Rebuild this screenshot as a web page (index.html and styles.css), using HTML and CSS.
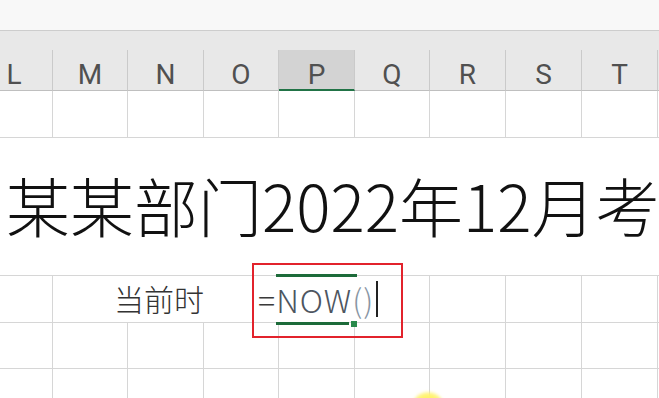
FILE: index.html
```html
<!DOCTYPE html>
<html lang="zh-CN">
<head>
<meta charset="utf-8">
<title>考勤表</title>
<link rel="stylesheet" href="styles.css">
</head>
<body>
<div class="page">
  <div class="topstrip"></div>
  <div class="header grid">
    <div class="hcell first">L</div>
    <div class="hcell">M</div>
    <div class="hcell">N</div>
    <div class="hcell">O</div>
    <div class="hcell sel">P</div>
    <div class="hcell">Q</div>
    <div class="hcell">R</div>
    <div class="hcell">S</div>
    <div class="hcell">T</div>
    <div class="hcell last"></div>
  </div>
  <div class="grid body">
    <!-- row 1 -->
    <div class="cell r1"></div><div class="cell r1"></div><div class="cell r1"></div><div class="cell r1"></div><div class="cell r1"></div><div class="cell r1"></div><div class="cell r1"></div><div class="cell r1"></div><div class="cell r1"></div><div class="cell r1 last"></div>
    <!-- row 2: merged title -->
    <div class="cell title">某某部门2022年12月考勤表</div>
    <!-- row 3 -->
    <div class="cell r3"></div>
    <div class="cell r3 label">当前时</div>
    <div class="cell r3 open"></div>
    <div class="cell r3 open active">
      <div class="editor"><span class="eq">=</span><span class="fn">NOW</span><span class="par">()</span><span class="caret"></span></div>
      <div class="handle"></div>
    </div>
    <div class="cell r3"></div>
    <div class="cell r3"></div>
    <div class="cell r3"></div>
    <div class="cell r3"></div>
    <div class="cell r3 last"></div>
    <!-- row 4 -->
    <div class="cell r4"></div><div class="cell r4"></div><div class="cell r4"></div><div class="cell r4"></div><div class="cell r4"></div><div class="cell r4"></div><div class="cell r4"></div><div class="cell r4"></div><div class="cell r4"></div><div class="cell r4 last"></div>
    <!-- row 5 -->
    <div class="cell r5"></div><div class="cell r5"></div><div class="cell r5"></div><div class="cell r5"></div><div class="cell r5"></div><div class="cell r5"></div><div class="cell r5"></div><div class="cell r5"></div><div class="cell r5"></div><div class="cell r5 last"></div>
  </div>
  <div class="annot"></div>
  <div class="pointer"></div>
</div>
</body>
</html>
```

FILE: styles.css
```css
* { box-sizing: border-box; }
html, body { margin: 0; padding: 0; background: #fff; }
.page {
  position: relative;
  width: 659px;
  height: 398px;
  overflow: hidden;
  background: #fff;
  font-family: "Noto Sans CJK SC", "Noto Sans", sans-serif;
}
.topstrip {
  height: 30px;
  background: #f8f8f8;
}
.grid {
  display: grid;
  grid-template-columns: 53px 75px 76px 75px 76px 75px 76px 76px 76px 1fr;
}
.header {
  background: #e8e8e8;
  border-top: 1px solid #cdcdcd;
  padding-top: 19px;
}
.hcell {
  height: 41px;
  padding-top: 10px;
  line-height: 30px;
  text-align: center;
  font-family: Roboto, "Liberation Sans", sans-serif;
  font-size: 28px;
  color: #505050;
  border-right: 1px solid #cacaca;
  border-bottom: 1px solid #bfbfbf;
}
.hcell.first { padding-right: 24px; }
.hcell.sel {
  background: #d3d3d3;
  border-bottom: 2px solid #217346;
}
.hcell.last { border-right: none; }
.cell {
  border-right: 1px solid #d6d6d6;
  border-bottom: 1px solid #d6d6d6;
}
.cell.last { border-right: none; }
.r1 { height: 47px; }
.r3 { height: 47px; }
.r4 { height: 46px; }
.r5 { height: 47px; }
.title {
  grid-column: 1 / -1;
  height: 138px;
  border-right: none;
  display: flex;
  align-items: center;
  padding-left: 6px;
  padding-bottom: 6px;
  font-size: 64px;
  font-weight: 300;
  color: #111;
  white-space: nowrap;
  overflow: hidden;
}
.label {
  grid-column: span 2;
  border-right: none;
  text-align: right;
  font-size: 30px;
  font-weight: 300;
  line-height: 44px;
  color: #333;
  padding-right: 0;
}
.open { border-right: none; }
.active { position: relative; }
.active::before {
  content: "";
  position: absolute;
  left: -3px;
  top: -2px;
  width: 81px;
  height: 3px;
  background: #1d6b3a;
}
.active::after {
  content: "";
  position: absolute;
  left: -3px;
  top: 46px;
  width: 73px;
  height: 3px;
  background: #1d6b3a;
}
.handle {
  position: absolute;
  left: 72px;
  top: 45px;
  width: 6px;
  height: 6px;
  background: #2a8a4c;
}
.editor {
  position: absolute;
  left: -21px;
  top: 0;
  height: 46px;
  display: flex;
  align-items: center;
  font-size: 32px;
  font-weight: 300;
  letter-spacing: 1px;
  white-space: nowrap;
  line-height: 46px;
}
.eq { color: #3a3a3a; }
.fn { color: #4d5560; }
.par { color: #8896a4; }
.caret {
  display: inline-block;
  width: 2px;
  height: 36px;
  margin-left: 2px;
  background: #222;
}
.annot {
  position: absolute;
  left: 252px;
  top: 263px;
  width: 151px;
  height: 75px;
  border: 2px solid #e2232c;
}
.pointer {
  position: absolute;
  left: 411px;
  top: 392px;
  width: 34px;
  height: 34px;
  border-radius: 50%;
  background: radial-gradient(circle, #fff04a 0%, #fff36e 55%, rgba(255,245,140,0) 100%);
  filter: blur(1.5px);
}
```
